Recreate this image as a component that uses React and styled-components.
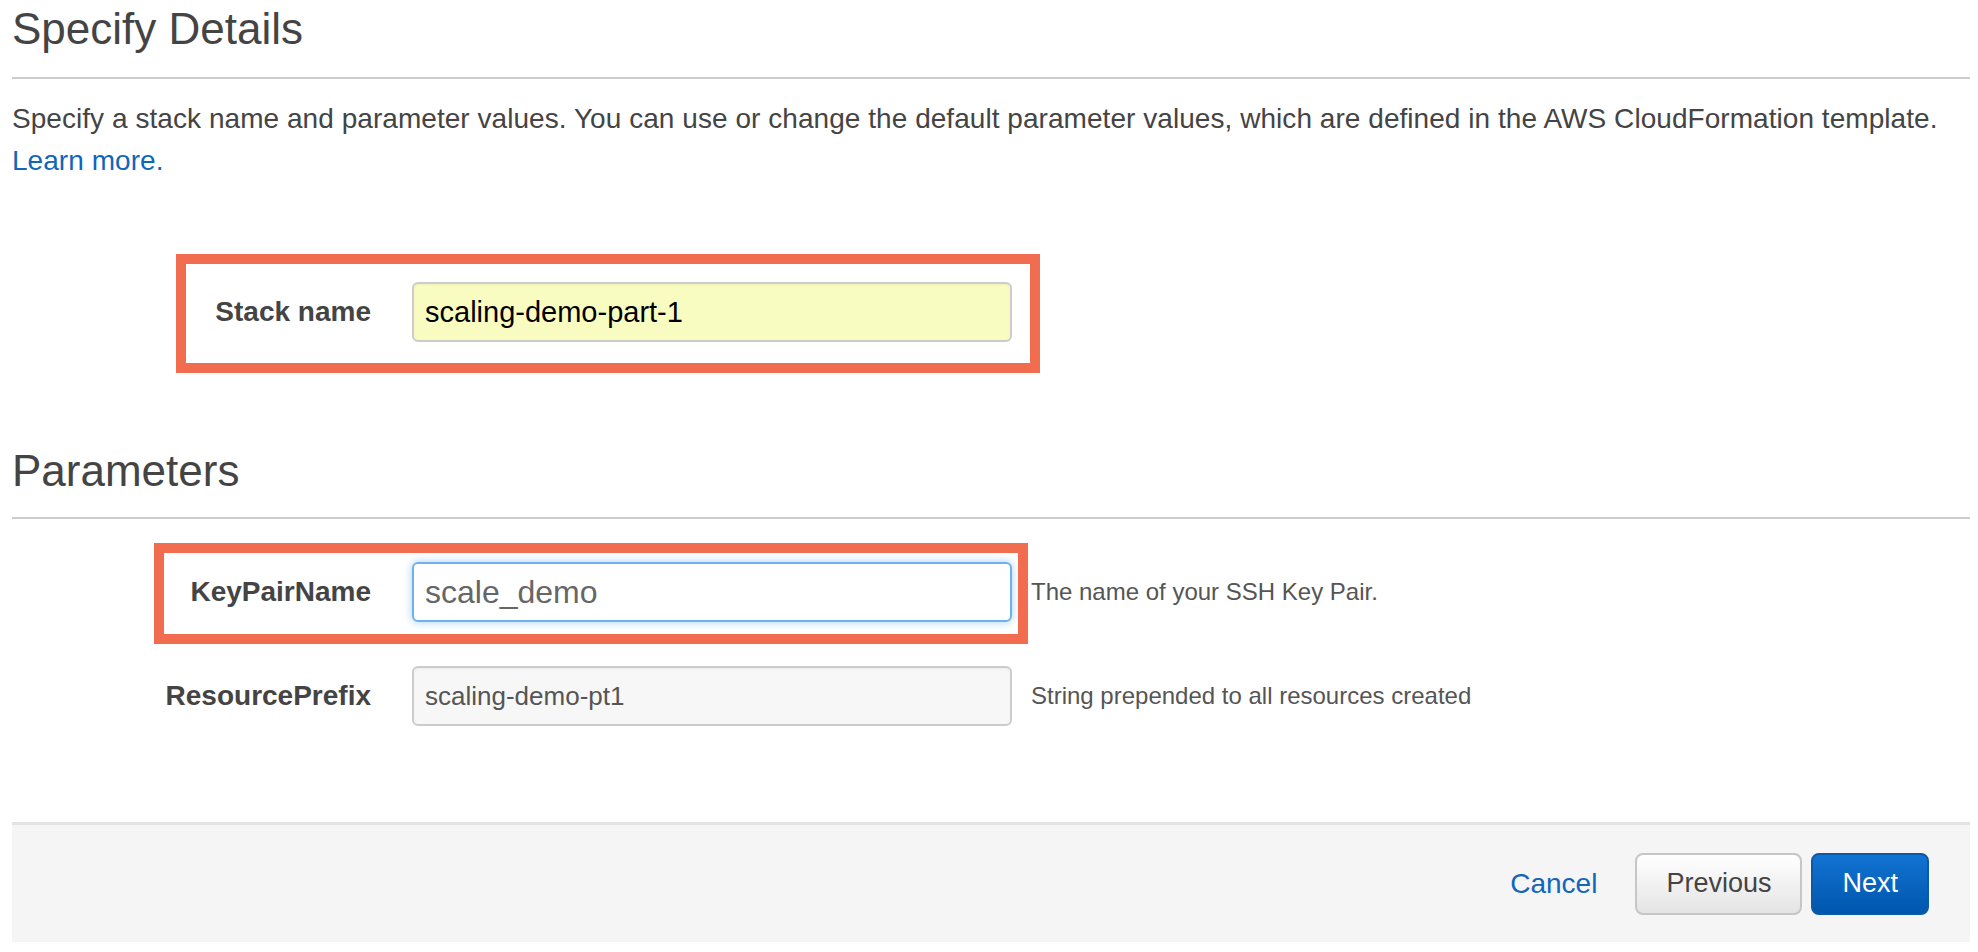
import React from 'react'
import styled, { createGlobalStyle } from 'styled-components'

const GlobalStyle = createGlobalStyle`
  body {
    margin: 0;
    background: #fff;
    font-family: "Liberation Sans", Arial, Helvetica, sans-serif;
    color: #444;
  }
`

const Page = styled.div`
  width: 1958px;
  padding: 5px 8px 7px 12px;
  display: flex;
  flex-direction: column;
`

const Title = styled.h1`
  margin: 0;
  font-size: 44px;
  line-height: 48px;
  font-weight: normal;
  color: #444;
  margin-top: ${(props) => props.$top || 0}px;
`

const Rule = styled.div`
  height: 2px;
  background: #cccccc;
  margin-top: ${(props) => props.$top}px;
`

const Intro = styled.p`
  margin: 19px 0 0;
  font-size: 28px;
  line-height: 42px;
  color: #444;
  letter-spacing: 0.05px;
`

const Link = styled.a`
  color: #1166bb;
  text-decoration: none;
  cursor: pointer;
`

const Form = styled.div`
  display: flex;
  flex-direction: column;
  gap: 44px;
  margin-top: ${(props) => props.$top}px;
`

const Row = styled.div`
  position: relative;
  display: grid;
  grid-template-columns: 400px 600px auto;
  align-items: center;
  height: 60px;
`

const Highlight = styled.div`
  position: absolute;
  left: ${(props) => props.$left}px;
  top: ${(props) => props.$top}px;
  width: ${(props) => props.$width}px;
  height: ${(props) => props.$height}px;
  border: 10px solid #f26c4f;
  box-sizing: border-box;
  pointer-events: none;
`

const Label = styled.label`
  padding-right: 41px;
  text-align: right;
  font-size: 28px;
  font-weight: bold;
  color: #444;
`

const Input = styled.div`
  box-sizing: border-box;
  height: 60px;
  padding: 0 11px;
  display: flex;
  align-items: center;
  border: 2px solid ${(props) => (props.$focus ? '#6fb2ea' : '#cccccc')};
  border-radius: 6px;
  background: ${(props) => props.$bg || '#fff'};
  box-shadow: ${(props) => (props.$focus ? '0 0 8px rgba(102, 175, 233, 0.6)' : 'inset 0 1px 2px rgba(0,0,0,0.05)')};
  font-size: ${(props) => props.$size || 29}px;
  color: ${(props) => props.$color || '#000'};
  white-space: nowrap;
`

const Help = styled.span`
  margin-left: 19px;
  font-size: 24px;
  color: #555;
`

const Footer = styled.div`
  margin-top: 96px;
  height: 120px;
  box-sizing: border-box;
  border-top: 3px solid #e3e3e3;
  background: #f5f5f5;
  display: flex;
  align-items: center;
  justify-content: flex-end;
  padding-right: 41px;
`

const Cancel = styled.a`
  font-size: 28px;
  color: #1166bb;
  margin-right: 38px;
  cursor: pointer;
`

const Button = styled.button`
  height: 62px;
  box-sizing: border-box;
  padding: 0 29px;
  margin-left: ${(props) => (props.$primary ? 9 : 0)}px;
  border-radius: 8px;
  font-family: inherit;
  font-size: 27px;
  cursor: pointer;
  border: 2px solid ${(props) => (props.$primary ? '#0b5aa8' : '#c6c6c6')};
  color: ${(props) => (props.$primary ? '#fff' : '#444')};
  background: ${(props) =>
    props.$primary
      ? 'linear-gradient(#1273d3, #0056ac)'
      : 'linear-gradient(#ffffff, #e4e4e4)'};
`

export default function App() {
  return (
    <>
      <GlobalStyle />
      <Page>
        <Title>Specify Details</Title>
        <Rule $top={24} />
        <Intro>
          Specify a stack name and parameter values. You can use or change the default parameter values, which are defined in the AWS CloudFormation template.
          <br />
          <Link>Learn more.</Link>
        </Intro>

        <Form $top={100}>
          <Row>
            <Highlight $left={164} $top={-28} $width={864} $height={119} />
            <Label>Stack name</Label>
            <Input $bg="#f8fcc0">scaling-demo-part-1</Input>
          </Row>
        </Form>

        <Title $top={105}>Parameters</Title>
        <Rule $top={22} />

        <Form $top={43}>
          <Row>
            <Highlight $left={142} $top={-19} $width={874} $height={101} />
            <Label>KeyPairName</Label>
            <Input $focus $size={32} $color="#666">scale_demo</Input>
            <Help>The name of your SSH Key Pair.</Help>
          </Row>
          <Row>
            <Label>ResourcePrefix</Label>
            <Input $bg="#f7f7f7" $size={26} $color="#555">scaling-demo-pt1</Input>
            <Help>String prepended to all resources created</Help>
          </Row>
        </Form>

        <Footer>
          <Cancel>Cancel</Cancel>
          <Button>Previous</Button>
          <Button $primary>Next</Button>
        </Footer>
      </Page>
    </>
  )
}
